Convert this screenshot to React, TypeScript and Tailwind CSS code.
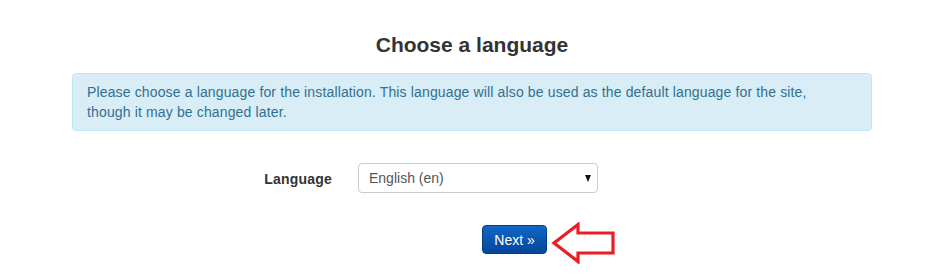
import { useState } from 'react'

const LANGS = ['English (en)']

export default function App() {
  const [lang, setLang] = useState(LANGS[0])

  return (
    <div className="w-[947px] h-[273px] bg-white font-['Liberation_Sans',Arial,sans-serif] text-[#333] text-[14px] leading-[20px]">
      <div className="w-[800px] ml-[72px] pt-[32px]">
        <h2 className="text-center text-[21px] leading-[26px] font-bold text-[#333]">Choose a language</h2>

        {/* Info alert */}
        <div className="mt-[15px] border border-[#bce8f1] bg-[#d9edf7] text-[#31708f] rounded-[4px] px-[14px] py-[8px] tracking-[0.14px]">
          Please choose a language for the installation. This language will also be used as the default language for the site,
          <br />
          though it may be changed later.
        </div>

        {/* Language select row */}
        <div className="mt-[32px] flex items-center">
          <label className="w-[260px] text-right font-bold tracking-[0.2px] pt-[2px]">Language</label>
          <div className="relative ml-[26px] w-[240px]">
            <select
              value={lang}
              onChange={(e) => setLang(e.target.value)}
              className="appearance-none w-full h-[30px] border border-[#ccc] rounded-[4px] bg-white pl-[10px] pr-[24px] text-[14px] text-[#555] outline-none"
            >
              {LANGS.map((l) => (
                <option key={l}>{l}</option>
              ))}
            </select>
            <span className="pointer-events-none absolute right-[7px] top-[12px] w-0 h-0 border-l-[3.5px] border-r-[3.5px] border-t-[7px] border-l-transparent border-r-transparent border-t-[#111]" />
          </div>
        </div>

        {/* Next button + callout arrow */}
        <div className="mt-[32px] flex items-start">
          <button className="ml-[410px] w-[65px] h-[29px] rounded-[4px] border border-[#043f86] bg-gradient-to-b from-[#1266c6] to-[#04479a] text-white text-[14px]">
            Next »
          </button>
          <svg width="66" height="42" viewBox="0 0 66 42" className="ml-[4px] -mt-[3px]">
            <path
              d="M3 21 L27 2.5 L27 11 L62 11 L62 31 L27 31 L27 39.5 Z"
              fill="none"
              stroke="#ed1c24"
              strokeWidth="3.2"
              strokeLinejoin="miter"
            />
          </svg>
        </div>
      </div>
    </div>
  )
}
